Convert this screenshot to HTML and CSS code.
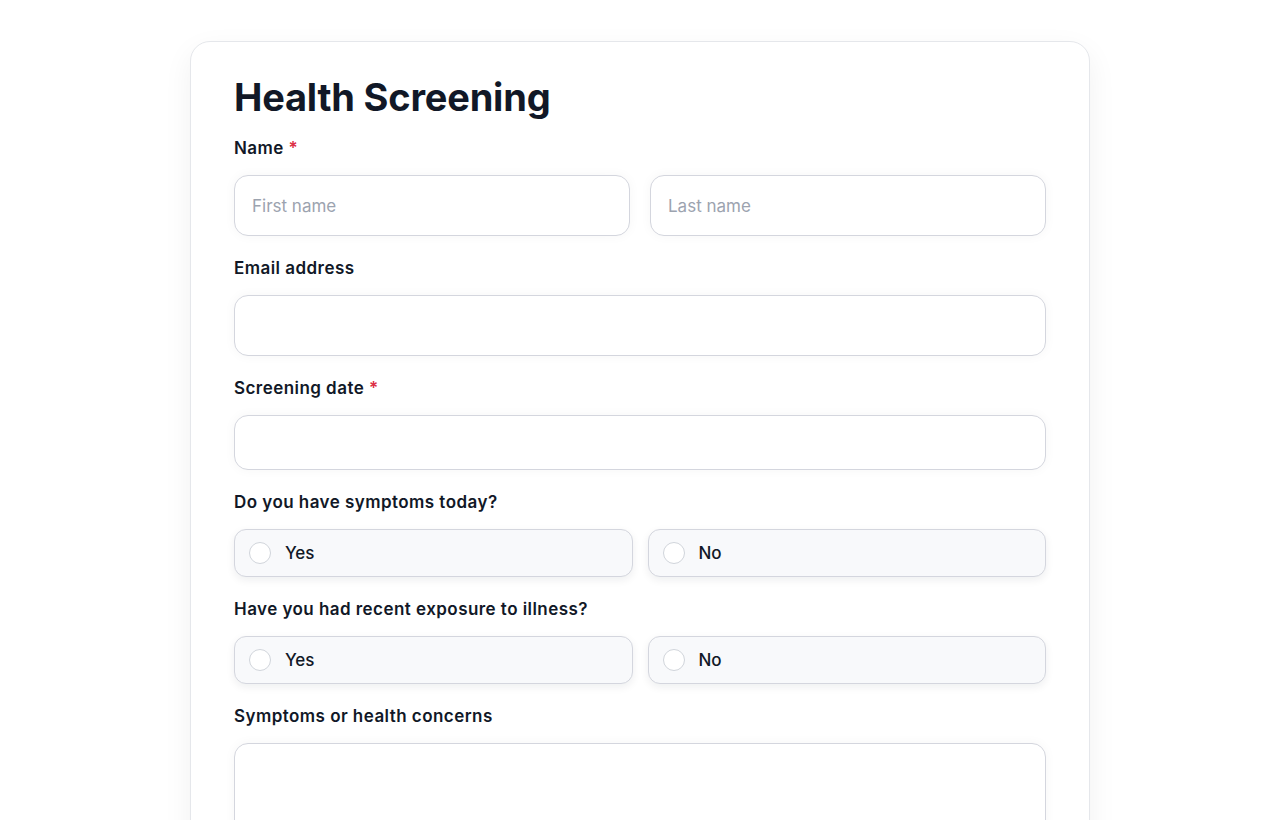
FILE: index.html
```html
<!DOCTYPE html>
<html lang="en">
<head>
    <meta charset="UTF-8">
    <meta name="viewport" content="width=device-width, initial-scale=1.0">
    <title>Health Screening</title>
    <link rel="stylesheet" href="styles.css">
</head>
<body>

    <div class="card">
        <h1>Health Screening</h1>

        <div class="field">
            <label>Name <span class="req">*</span></label>
            <div class="row">
                <input type="text" class="input" placeholder="First name">
                <input type="text" class="input" placeholder="Last name">
            </div>
        </div>

        <div class="field">
            <label>Email address</label>
            <input type="email" class="input">
        </div>

        <div class="field">
            <label>Screening date <span class="req">*</span></label>
            <input type="text" class="input date">
        </div>

        <div class="field">
            <label>Do you have symptoms today?</label>
            <div class="row options">
                <div class="option"><span class="radio"></span>Yes</div>
                <div class="option"><span class="radio"></span>No</div>
            </div>
        </div>

        <div class="field">
            <label>Have you had recent exposure to illness?</label>
            <div class="row options">
                <div class="option"><span class="radio"></span>Yes</div>
                <div class="option"><span class="radio"></span>No</div>
            </div>
        </div>

        <div class="field">
            <label>Symptoms or health concerns</label>
            <textarea class="input area"></textarea>
        </div>
    </div>

</body>
</html>
```

FILE: styles.css
```css
body { margin: 0; background: #fff; font-family: Inter, "Noto Sans", sans-serif; color: #111827; }
.card { width: 900px; box-sizing: border-box; margin: 41px auto 40px; padding: 31px 43px 40px; background: #fff; border: 1px solid #e5e7eb; border-radius: 20px; box-shadow: 0 10px 30px rgba(15, 23, 42, 0.06); }
h1 { margin: 0 0 16px; font-size: 38px; line-height: 48px; font-weight: 700; letter-spacing: -0.2px; color: #111827; }

.field { margin-bottom: 21px; }
.field label { display: block; font-size: 17px; line-height: 23px; font-weight: 600; letter-spacing: 0.45px; margin-bottom: 15px; color: #111827; }
.req { color: #dc2f45; }

.row { display: flex; gap: 20px; }
.row .input { flex: 1; min-width: 0; }
.options { gap: 15px; margin-top: 1px; }

.input { display: block; width: 100%; box-sizing: border-box; height: 61px; padding: 0 17px; border: 1px solid #d4d6de; border-radius: 14px; background: #fff; font-family: inherit; font-size: 17px; color: #111827; outline: none; box-shadow: 0 0 12px rgba(15, 23, 42, 0.04); }
.input::placeholder { color: #9ca3af; }
.date { height: 55px; }
.area { height: 140px; resize: none; }

.option { flex: 1; display: flex; align-items: center; height: 48px; box-sizing: border-box; padding: 0 14px; background: #f8f9fb; border: 1px solid #d4d6de; border-radius: 12px; font-size: 17px; font-weight: 500; box-shadow: 0 3px 8px rgba(15, 23, 42, 0.07); }
.radio { width: 22px; height: 22px; box-sizing: border-box; border: 1.5px solid #d1d5db; border-radius: 50%; background: #fff; margin-right: 14px; }
```
